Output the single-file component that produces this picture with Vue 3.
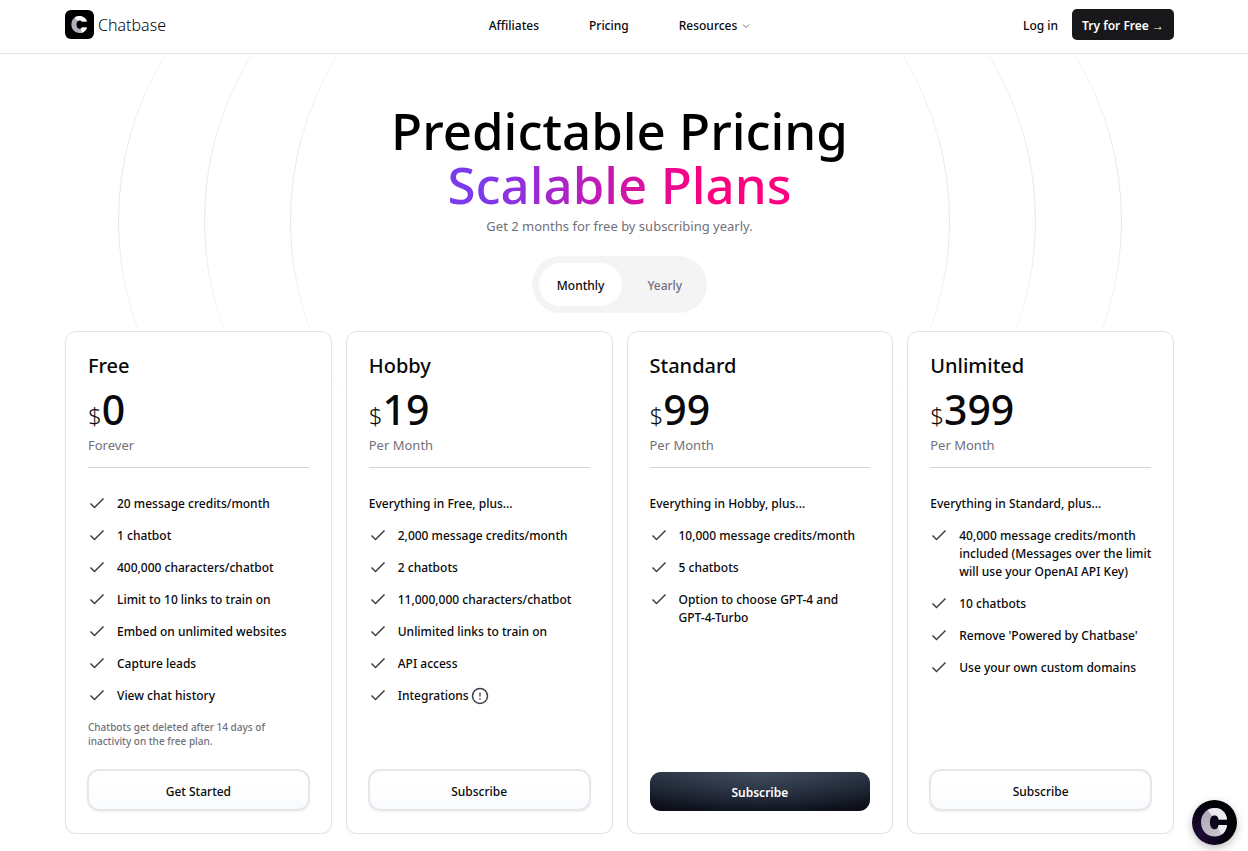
<script setup>
import { ref } from 'vue'

const billing = ref('monthly')

const plans = [
  {
    name: 'Free',
    price: '0',
    period: 'Forever',
    features: [
      '20 message credits/month',
      '1 chatbot',
      '400,000 characters/chatbot',
      'Limit to 10 links to train on',
      'Embed on unlimited websites',
      'Capture leads',
      'View chat history',
    ],
    note: 'Chatbots get deleted after 14 days of inactivity on the free plan.',
    action: 'Get Started',
  },
  {
    name: 'Hobby',
    price: '19',
    period: 'Per Month',
    intro: 'Everything in Free, plus...',
    features: [
      '2,000 message credits/month',
      '2 chatbots',
      '11,000,000 characters/chatbot',
      'Unlimited links to train on',
      'API access',
      'Integrations',
    ],
    info: 'Integrations',
    action: 'Subscribe',
  },
  {
    name: 'Standard',
    price: '99',
    period: 'Per Month',
    intro: 'Everything in Hobby, plus...',
    features: [
      '10,000 message credits/month',
      '5 chatbots',
      'Option to choose GPT-4 and\nGPT-4-Turbo',
    ],
    action: 'Subscribe',
    featured: true,
  },
  {
    name: 'Unlimited',
    price: '399',
    period: 'Per Month',
    intro: 'Everything in Standard, plus...',
    features: [
      '40,000 message credits/month included (Messages over the limit will use your OpenAI API Key)',
      '10 chatbots',
      "Remove 'Powered by Chatbase'",
      'Use your own custom domains',
    ],
    action: 'Subscribe',
  },
]
</script>

<template>
  <div class="page">
    <header class="header">
      <div class="container bar">
        <a class="brand" href="#">
          <svg class="logo" viewBox="0 0 29 29" aria-hidden="true">
            <rect width="29" height="29" rx="6" fill="#000" />
            <path d="M22 11.600C21 8.200 18 6 14.400 6 9.800 6 6.400 9.600 6.400 14.500S9.800 23 14.400 23c3.600 0 6.600-2.200 7.600-5.600h-5.200c-.6.900-1.300 1.300-2.300 1.300-1.800 0-3-1.700-3-4.200s1.200-4.200 3-4.200c1 0 1.700.4 2.300 1.300z" fill="#b3aebb" />
            <path d="M22 11.600C21 8.200 18 6 14.400 6c-1.800 0-3.400.5-4.700 1.500l3.200 3.400c.4-.4 1-.6 1.600-.6 1 0 1.700.4 2.300 1.300zM22 17.400c-.8 2.800-3 4.900-5.700 5.400v-4.700l.5-.7z" fill="#fff" />
          </svg>
          <span>Chatbase</span>
        </a>
        <nav class="nav">
          <a href="#">Affiliates</a>
          <a href="#">Pricing</a>
          <button class="menu" type="button">
            Resources
            <svg viewBox="0 0 8 8" aria-hidden="true"><path d="M1 2.500 4 5.500 7 2.500" fill="none" stroke="#71717a" /></svg>
          </button>
        </nav>
        <div class="account">
          <a href="#">Log in</a>
          <a class="try" href="#">Try for Free →</a>
        </div>
      </div>
    </header>

    <main class="container main">
      <svg class="rings" viewBox="0 0 1109 360" aria-hidden="true">
        <defs>
          <linearGradient id="ring" gradientUnits="userSpaceOnUse" x1="0" y1="-30" x2="0" y2="350">
            <stop offset="0" stop-color="#e2e8f0" stop-opacity="0.500" />
            <stop offset="0.500" stop-color="#e2e8f0" />
            <stop offset="1" stop-color="#e2e8f0" stop-opacity="0.100" />
          </linearGradient>
        </defs>
        <g fill="none" stroke="url(#ring)">
          <path v-for="x in [53, 139, 225]" :key="x" :d="`M${x + 48} 0A316 316 0 0 0 ${x + 51} 338`" />
          <path v-for="x in [885, 971, 1057]" :key="x" :d="`M${x - 48} 0A316 316 0 0 1 ${x - 51} 338`" />
        </g>
      </svg>

      <section class="hero">
        <h1>Predictable Pricing<br /><span>Scalable Plans</span></h1>
        <p>Get 2 months for free by subscribing yearly.</p>
        <div class="toggle">
          <button type="button" :class="{ active: billing === 'monthly' }" @click="billing = 'monthly'">Monthly</button>
          <button type="button" :class="{ active: billing === 'yearly' }" @click="billing = 'yearly'">Yearly</button>
        </div>
      </section>

      <section class="plans">
        <article v-for="plan in plans" :key="plan.name" class="card">
          <h2>{{ plan.name }}</h2>
          <p class="price"><span>$</span><strong>{{ plan.price }}</strong></p>
          <p class="period">{{ plan.period }}</p>
          <hr />
          <p v-if="plan.intro" class="intro">{{ plan.intro }}</p>
          <ul>
            <li v-for="feature in plan.features" :key="feature">
              <svg class="check" viewBox="0 0 18 18" aria-hidden="true"><path d="m2.500 8.500 4 4L15.500 3.500" fill="none" stroke="#3f3f46" stroke-width="1.500" /></svg>
              <span>{{ feature }}</span>
              <svg v-if="feature === plan.info" class="info" viewBox="0 0 18 18" aria-hidden="true">
                <circle cx="9" cy="9" r="7.500" fill="none" stroke="#3f3f46" stroke-width="1.500" />
                <path d="M9 5.500v4M9 11.300v1.500" stroke="#3f3f46" stroke-width="1.300" />
              </svg>
            </li>
          </ul>
          <p v-if="plan.note" class="note">{{ plan.note }}</p>
          <button type="button" class="action" :class="{ featured: plan.featured }">{{ plan.action }}</button>
        </article>
      </section>
    </main>

    <button class="chat" type="button" aria-label="Open chat">
      <svg viewBox="0 0 45 45" aria-hidden="true">
        <defs>
          <radialGradient id="bubble" cx="0.200" cy="0.750" r="0.700">
            <stop offset="0" stop-color="#1c0b38" />
            <stop offset="1" stop-color="#020106" />
          </radialGradient>
          <linearGradient id="metal" x1="0" y1="0" x2="1" y2="1">
            <stop offset="0" stop-color="#a9a4b2" />
            <stop offset="1" stop-color="#cfccd4" />
          </linearGradient>
        </defs>
        <circle cx="22.500" cy="22.500" r="22.500" fill="url(#bubble)" />
        <path d="M35 19.500C34.200 12.500 29.500 8 22.800 8 15 8 9 14 9 22.300S15 36.500 22.800 36.500c6.700 0 11.400-4.500 12.200-11.500h-8.300c-.6 2.800-2 4.300-4.100 4.300-2.900 0-4.700-2.700-4.700-7s1.800-7 4.700-7c2.100 0 3.500 1.400 4.100 4.200z" fill="url(#metal)" />
        <path d="M35 19.500C34.200 12.500 29.500 8 22.800 8c-2.600 0-5 .7-7 1.900l4.500 6.100c.7-.5 1.400-.7 2.300-.7 2.100 0 3.500 1.400 4.100 4.200zM35 25c-.5 4.200-2.300 7.500-5.200 9.500l-4-6.700c.4-.8.700-1.700.9-2.800z" fill="#eceaf0" />
      </svg>
    </button>
  </div>
</template>

<style>
body {
  margin: 0;
  background: #fff;
}
</style>

<style scoped>
.page {
  font-family: "Noto Sans", "Open Sans", sans-serif;
  font-size: 12px;
  font-weight: 500;
  line-height: 18px;
  color: #09090b;
}

.page * {
  box-sizing: border-box;
}

h1, h2, p, ul {
  margin: 0;
  padding: 0;
}

a {
  color: inherit;
  text-decoration: none;
}

button {
  font: inherit;
  color: inherit;
  border: 0;
  background: none;
  cursor: pointer;
}

.header {
  border-bottom: 1px solid #e4e4e7;
}

.container {
  max-width: 1118px;
  margin: 0 auto;
  padding-right: 9px;
}

.bar {
  display: grid;
  grid-template-columns: 1fr auto 1fr;
  align-items: center;
  height: 53px;
  padding-bottom: 4px;
}

.brand {
  display: flex;
  align-items: center;
  gap: 4px;
  font-size: 16px;
  font-weight: 300;
}

.logo {
  width: 29px;
  height: 29px;
}

.nav {
  display: flex;
  gap: 50px;
  padding-top: 2px;
}

.menu {
  display: flex;
  align-items: center;
  gap: 5px;
  padding: 0;
}

.menu svg {
  width: 8px;
  height: 8px;
}

.account {
  display: flex;
  justify-content: flex-end;
  align-items: baseline;
  gap: 14px;
}

.try {
  padding: 8px 10px 5px;
  border-radius: 5px;
  background: #18181b;
  color: #fff;
  font-weight: 600;
}

.main {
  position: relative;
}

.rings {
  position: absolute;
  top: 0;
  left: 0;
  width: calc(100% - 9px);
}

.hero {
  position: relative;
  display: flex;
  flex-direction: column;
  align-items: center;
  padding: 49px 0 18px;
}

h1 {
  font-size: 51px;
  font-weight: 500;
  line-height: 54px;
  text-align: center;
  color: #000;
}

h1 span {
  background: linear-gradient(90deg, #7c3aed 10%, #ff0080 75%);
  -webkit-background-clip: text;
  background-clip: text;
  color: transparent;
}

.hero p {
  margin-top: 6px;
  font-size: 13px;
  font-weight: 400;
  color: #71717a;
}

.toggle {
  display: flex;
  gap: 7px;
  margin-top: 21px;
  padding: 7px;
  border-radius: 29px;
  background: #f4f4f5;
}

.toggle button {
  height: 43px;
  padding: 2px 18px 0;
  border-radius: 22px;
  color: #71717a;
}

.toggle button.active {
  background: #fff;
  color: #09090b;
}

.plans {
  position: relative;
  display: grid;
  grid-template-columns: repeat(4, 1fr);
  gap: 14px;
}

.card {
  display: flex;
  flex-direction: column;
  min-height: 503px;
  padding: 22px;
  border: 1px solid #e4e4e7;
  border-radius: 11px;
  background: #fff;
  box-shadow: 0 1px 2px rgba(0, 0, 0, 0.05);
}

h2 {
  font-size: 20px;
  font-weight: 500;
  line-height: 24px;
}

.price {
  display: flex;
  align-items: baseline;
  margin-top: 7px;
  line-height: 48px;
}

.price span {
  font-size: 24px;
  font-weight: 300;
  line-height: 24px;
}

.price strong {
  font-size: 41px;
  font-weight: 500;
}

.period {
  margin-top: 3px;
  font-size: 13px;
  font-weight: 400;
  color: #71717a;
}

hr {
  width: 100%;
  height: 1px;
  margin: 13px 0 27px;
  border: 0;
  background: #d4d4d8;
}

.intro {
  margin-bottom: 14px;
}

ul {
  display: flex;
  flex-direction: column;
  gap: 14px;
  margin-right: -6px;
  list-style: none;
}

li {
  display: flex;
  white-space: pre-line;
}

.check {
  flex: none;
  width: 18px;
  height: 18px;
  margin-right: 11px;
}

.info {
  flex: none;
  width: 18px;
  height: 18px;
  margin-left: 2px;
}

.note {
  margin-top: 15px;
  font-size: 10px;
  line-height: 14px;
  color: #71717a;
}

.action {
  height: 42px;
  margin: auto -1px 0;
  padding-top: 4px;
  border: 2px solid #e5e7eb;
  border-radius: 12px;
  background: linear-gradient(#fff 40%, #f8fafc);
  box-shadow: 0 1px 2px rgba(0, 0, 0, 0.06);
}

.action.featured {
  height: 39px;
  margin: auto 0 0;
  border: 0;
  border-radius: 11px;
  background: radial-gradient(ellipse 60% 120% at top, rgba(100, 116, 139, 0.4), transparent), linear-gradient(#283242, #0a0d18);
  box-shadow: none;
  color: #fff;
  font-weight: 600;
}

.chat {
  position: fixed;
  right: 11px;
  bottom: 6px;
  width: 45px;
  height: 45px;
  padding: 0;
  border-radius: 50%;
  box-shadow: 0 3px 8px rgba(0, 0, 0, 0.25);
}

.chat svg {
  display: block;
}
</style>
